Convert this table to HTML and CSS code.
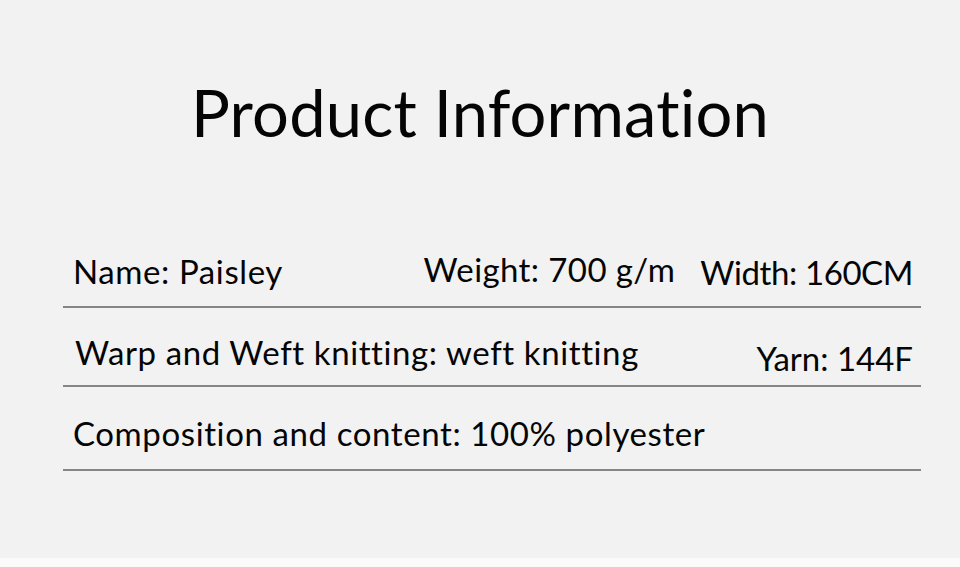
FILE: index.html
```html
<!DOCTYPE html>
<html lang="en">
<head>
<meta charset="utf-8">
<title>Product Information</title>
<link rel="stylesheet" href="styles.css">
</head>
<body>
<main class="page">
  <h1 class="title">Product Information</h1>
  <section class="table">
    <div class="row row-1">
      <span class="cell name">Name: Paisley</span>
      <span class="cell weight">Weight: 700 g/m</span>
      <span class="cell width">Width: 160CM</span>
    </div>
    <div class="row row-2">
      <span class="cell warp">Warp and Weft knitting: weft knitting</span>
      <span class="cell yarn">Yarn: 144F</span>
    </div>
    <div class="row row-3">
      <span class="cell comp">Composition and content: 100% polyester</span>
    </div>
  </section>
</main>
</body>
</html>
```

FILE: styles.css
```css
html, body {
  margin: 0;
  padding: 0;
}
body {
  background: #fafafa;
  font-family: Lato, "Open Sans", sans-serif;
  font-variant-ligatures: none;
  color: #050505;
}
.page {
  background: #f2f2f2;
  height: 558px;
  padding-top: 72px;
  box-sizing: border-box;
}
.title {
  margin: 0;
  font-size: 65px;
  line-height: 80px;
  font-weight: 400;
  text-align: center;
  letter-spacing: 0.2px;
}
.table {
  margin: 99px 39px 0 63px;
}
.row {
  display: flex;
  align-items: flex-start;
  font-size: 33px;
  line-height: 40px;
  letter-spacing: 0.6px;
  border-bottom: 2px solid #858585;
  padding: 0 8px 0 10px;
}
.row-1 { padding-top: 0; padding-bottom: 15px; }
.row-2 { padding-top: 24px; padding-bottom: 13px; }
.row-3 { padding-top: 26px; padding-bottom: 16px; }
.name { flex: 1; }
.weight { margin-top: -2px; margin-bottom: 2px; letter-spacing: 0.4px; }
.width { margin-left: 25px; margin-top: 1px; margin-bottom: -1px; letter-spacing: -0.4px; }
.warp { flex: 1; margin-left: 2px; }
.yarn { margin-top: 6px; margin-bottom: -6px; letter-spacing: 0; }
```
